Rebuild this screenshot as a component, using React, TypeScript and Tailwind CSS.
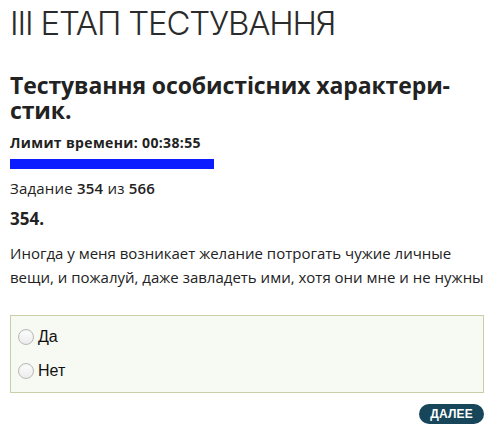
import React from 'react';

function Radio({ label }: { label: string }) {
    return (
        <label className="flex items-center h-[34px] cursor-pointer">
            <span className="w-[16px] h-[16px] rounded-full border border-[#b9b9b9] bg-gradient-to-b from-[#fdfdfd] to-[#ececec] shadow-[inset_0_1px_1px_rgba(0,0,0,0.05)]" />
            <span className="ml-[4px] text-[16px] text-[#111] font-['Liberation_Sans',sans-serif]">{label}</span>
        </label>
    );
}

export default function App() {
    return (
        <div className="w-[486px] h-[441px] bg-white text-[#262626] font-['Open_Sans',Arial,sans-serif] overflow-hidden">
            <div className="pl-[10px] pr-[2px]">
                <h1 className="mt-[3px] text-[33px] leading-[40px] font-light tracking-[-1.2px] text-[#2b2b2b] font-['Inter',sans-serif]">
                    III ЕТАП ТЕСТУВАННЯ
                </h1>
                <h2 className="mt-[30px] text-[23px] leading-[25px] font-bold tracking-[-0.1px] text-[#222]">
                    Тестування особистісних характери-<br />стик.
                </h2>
                <div className="mt-[11px] text-[14px] leading-[18px] font-bold tracking-[0.35px] text-[#222]">Лимит времени: 00:38:55</div>
                <div className="mt-[7px] h-[10px] w-[204px] bg-[#0b1dff]" />
                <div className="mt-[9px] text-[15px] leading-[20px] tracking-[0.2px] text-[#222]">
                    Задание <span className="font-semibold">354</span> из <span className="font-semibold">566</span>
                </div>
                <div className="mt-[10px] text-[17px] leading-[22px] font-bold text-[#222]">354.</div>
                <p className="mt-[11px] text-[15px] leading-[24px] text-[#222]">
                    Иногда у меня возникает желание потрогать чужие личные вещи, и пожалуй, даже завладеть ими, хотя они мне и не нужны
                </p>
                <div className="mt-[26px] w-[474px] border border-[#c6d0a8] bg-[#f7f9f3] px-[7px] py-[4px]">
                    <Radio label="Да" />
                    <Radio label="Нет" />
                </div>
                <div className="flex justify-end w-[474px] mt-[11px]">
                    <button className="h-[20px] px-[11px] rounded-[10px] bg-[#17465a] text-white text-[12px] font-extrabold tracking-[0.2px] leading-none font-['Liberation_Sans',sans-serif]">
                        ДАЛЕЕ
                    </button>
                </div>
            </div>
        </div>
    );
}
